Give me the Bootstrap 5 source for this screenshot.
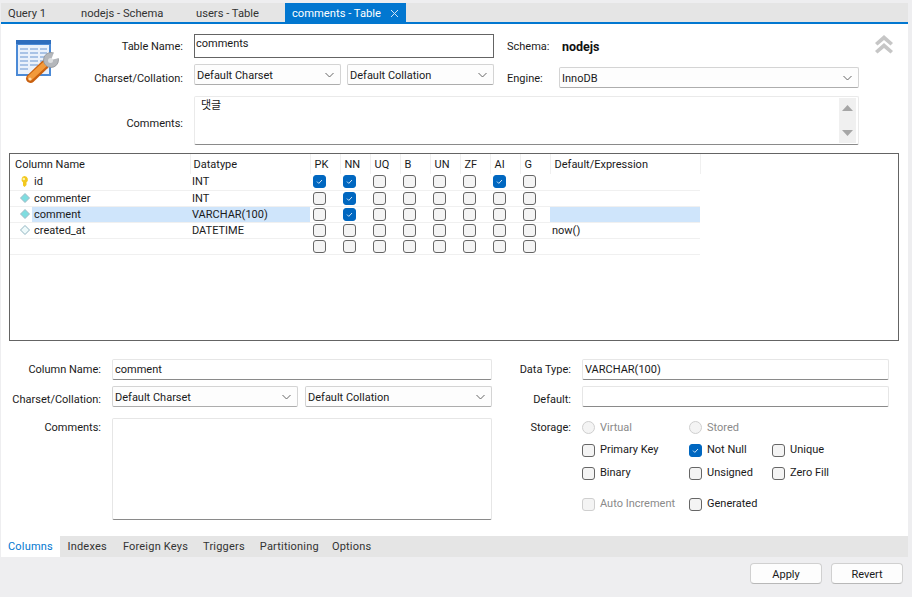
<!DOCTYPE html>
<html lang="en">
<head>
<meta charset="utf-8">
<title>comments - Table</title>
<link href="https://cdn.jsdelivr.net/npm/bootstrap@5.3.0/dist/css/bootstrap.min.css" rel="stylesheet">
<style>
html,body{height:100%;overflow:hidden}
body{background:#eeeef0;font-family:Roboto,"Noto Sans CJK KR",sans-serif;font-size:11px;line-height:16px;color:#1a1a1a}
.wb-root{width:908px;height:597px;display:flex;flex-direction:column;padding-left:1px;padding-top:3px;padding-bottom:3px}
.doc-tabs{height:21px;flex:none;background:#e5e5e5;border-bottom:2px solid #0277d0;display:flex;align-items:stretch;font-size:11.2px}
.doc-tab{padding:2px 7px 0;color:#333;white-space:nowrap;display:flex;align-items:center;height:19px;width:73px}
.doc-tab.t2{width:115px}.doc-tab.t3{width:96px}
.doc-tab.on{background:#0277d0;color:#fff;width:121px;justify-content:space-between}
.doc-main{flex:1 1 auto;background:#fff;min-height:0}
.top-grid{display:grid;padding:10px 0 0 14px;grid-template-columns:45px 123px 11px 147px 6px 147px 13px 52px 300px 16px 18px;grid-template-rows:24px 24px 51px;row-gap:6px}
.lbl{text-align:right;white-space:nowrap;align-self:center;padding-top:2px}
.lbl-l{white-space:nowrap;align-self:center;padding-top:2px}
.strong-name{font-size:12.5px;font-weight:700;padding-left:3px;color:#111}
.app-icon{grid-column:1;grid-row:1/3;margin-top:6px}
.wb-input.form-control{border-radius:2px;border:1px solid #e6e6e6;border-bottom-color:#8a8a8a;font-size:11px;line-height:16px;padding:0 2px;height:21px;min-height:0;color:#1a1a1a;box-shadow:none}
.wb-input.strong.form-control{border:1px solid #646464;border-radius:0;height:24px;padding:0 1px 6px}
.wb-select.form-select{border-radius:2px;border:1px solid #d4d4d4;border-bottom-color:#adadad;font-size:11px;line-height:16px;padding:2px 20px 0 2px;height:21px;color:#1a1a1a;background-color:#fdfdfd;background-position:right 6px center;background-size:9px 6px;box-shadow:none;background-image:url("data:image/svg+xml,%3csvg xmlns='http://www.w3.org/2000/svg' viewBox='0 0 9 6'%3e%3cpath fill='none' stroke='%23666' d='M.5 1l4 4 4-4'/%3e%3c/svg%3e")}
.note-box{grid-column:4/10;grid-row:3;display:flex;border:1px solid #eaeaea;border-bottom-color:#8a8a8a;border-radius:2px;padding:1px;background:#fff;margin-top:2px}
.note-text{flex:1 1 auto;padding:0 5px;line-height:16px}
.scroll-side{width:17px;margin-right:1px;background:#f0f0f0;display:flex;flex-direction:column;justify-content:space-between;align-items:center;padding:7px 0}
.grid-box{margin:8px 0 0 8px;width:890px;height:188px;border:1px solid #646464;overflow:hidden}
.col-table.table{table-layout:fixed;width:690px;margin:0;border-collapse:collapse;--bs-table-bg:transparent;color:#1a1a1a;font-size:11px}
.col-table th,.col-table td{padding:0;line-height:15px;height:16px;border:0;box-shadow:none;white-space:nowrap;overflow:hidden;vertical-align:middle;color:#1a1a1a}
.col-table th{font-weight:400;height:20px;padding:1px 0 0 4px;border-right:1px solid #f0f0f0;background:#fff}
.col-table th.first{padding-left:5px}
.col-table th.second{padding-left:3px}
.col-table td{border-bottom:1px solid #f0f0f0}
.col-table td.tt{padding-left:2px}
.col-table td.cc{padding-left:3px;line-height:0}
.name-wrap{display:flex;align-items:center;height:15px;padding-left:10px}
.name-wrap svg{flex:none;margin-right:2px}
.name-wrap svg.key-ico{margin-right:3px}
.name-wrap span{flex:1 1 auto;align-self:stretch;padding-left:2px}
.sel-bg{background:#cfe5fb}
.col-table td.sel{background:#cfe5fb}
.wb-check.form-check-input{width:13px;height:13px;margin:0;border:1px solid #666;border-radius:3px;background-color:#f4f4f4;box-shadow:none;vertical-align:top;opacity:1}
.wb-check.form-check-input:checked{background-color:#0067c0;border-color:#0067c0;background-size:11px 11px;background-image:url("data:image/svg+xml,%3csvg xmlns='http://www.w3.org/2000/svg' viewBox='0 0 11 11'%3e%3cpath fill='none' stroke='%23cfe4f7' d='M3 5.6l1.8 1.8L8 4'/%3e%3c/svg%3e")}
.wb-check.form-check-input:disabled{border-color:#cfcfcf;background-color:#f4f4f4}
.wb-check.form-check-input[type=radio]{border-radius:50%}
.low-row{display:flex;margin-top:18px}
.low-left{width:491px;display:grid;grid-template-columns:100px 11px 186px 7px 187px;grid-template-rows:21px 21px 102px;row-gap:6px}
.low-left .area{margin-top:5px;height:102px}
.low-right{width:397px;display:grid;grid-template-columns:79px 11px 307px;grid-template-rows:21px 21px auto;row-gap:6px;align-content:start}
.opts{grid-column:3;display:grid;grid-template-columns:107px 83px auto;margin-top:7px;row-gap:7px;align-content:start}
.opt{display:flex;align-items:center;gap:5px;height:16px;white-space:nowrap}
.opt.first{height:15px}
.opt.dim{color:#8a8a8a}
.opt.late{margin-top:8px}
.lbl.down{margin-top:5px}
.lbl.up{margin-bottom:1px}
.sto-lbl{align-self:start;margin-top:5px}
.sub-tabs{height:21px;flex:none;background:#e5e5e5;display:flex;align-items:center;color:#333;letter-spacing:.2px}
.sub-tab{height:21px;padding:1px 7.5px 0;display:flex;align-items:center;white-space:nowrap}
.sub-tab.on{background:#fff;color:#0277d0;width:59px;padding-left:7px}
.sub-tab.shift-r{margin-left:1px}
.sub-tab.shift-l{margin-left:-2px}
.foot-bar{flex:none;height:37px;display:flex;justify-content:flex-end;align-items:flex-start;gap:9px;padding:6px 5px 0 0}
.wb-btn.btn{width:72px;height:21px;padding:2px 0 0;font-size:11px;line-height:17px;border:1px solid #d0d0d0;border-bottom-color:#b8b8b8;border-radius:4px;background:#fdfdfd;color:#1a1a1a}
.wb-textarea.form-control{resize:none}
</style>
</head>
<body>
<div class="wb-root">
  <div class="doc-tabs">
    <div class="doc-tab">Query 1</div>
    <div class="doc-tab t2">nodejs - Schema</div>
    <div class="doc-tab t3">users - Table</div>
    <div class="doc-tab on">comments - Table
      <svg width="9" height="9" viewBox="0 0 9 9"><path d="M1 1l7 7M8 1L1 8" stroke="#cfe4f7" fill="none"/></svg>
    </div>
  </div>

  <div class="doc-main">
    <div class="top-grid">
      <svg class="app-icon" width="45" height="44" viewBox="0 0 45 44">
        <rect x="1" y="0" width="35" height="36" fill="#4b8ad6"/>
        <rect x="1" y="0" width="35" height="4" fill="#2d6dbd"/>
        <rect x="3" y="5" width="31" height="29" fill="#eaf1fb"/>
        <g fill="#a9c3e6">
          <rect x="5" y="8" width="8" height="2"/><rect x="15" y="8" width="8" height="2"/><rect x="25" y="8" width="7" height="2"/>
          <rect x="5" y="12" width="8" height="2"/><rect x="15" y="12" width="8" height="2"/><rect x="25" y="12" width="7" height="2"/>
          <rect x="5" y="16" width="8" height="2"/><rect x="15" y="16" width="8" height="2"/><rect x="25" y="16" width="7" height="2"/>
          <rect x="5" y="20" width="8" height="2"/><rect x="15" y="20" width="8" height="2"/><rect x="25" y="20" width="7" height="2"/>
          <rect x="5" y="24" width="8" height="2"/><rect x="15" y="24" width="8" height="2"/>
          <rect x="5" y="28" width="8" height="2"/>
        </g>
        <path d="M15.500 38.500l14-13.500" stroke="#c9600f" stroke-width="9" stroke-linecap="round"/>
        <path d="M15.500 37.500l13.500-12.500" stroke="#f29a3c" stroke-width="5.500" stroke-linecap="round"/>
        <circle cx="15" cy="39" r="1.600" fill="#ffd9a8"/>
        <circle cx="36" cy="20" r="7.500" fill="#b4b7bb" stroke="#8f9296" stroke-width=".8"/>
        <path d="M36 20L39.500 11H46V17.500z" fill="#fff"/>
        <circle cx="35.500" cy="20.500" r="2.500" fill="#dcdee0"/>
      </svg>
      <div class="lbl" style="grid-column:2;grid-row:1">Table Name:</div>
      <input class="form-control wb-input strong" style="grid-column:4/7;grid-row:1" value="comments">
      <div class="lbl-l" style="grid-column:8;grid-row:1">Schema:</div>
      <div class="lbl-l strong-name" style="grid-column:9;grid-row:1">nodejs</div>
      <svg style="grid-column:11;grid-row:1;margin-top:1px" width="18" height="19" viewBox="0 0 18 19"><path d="M0 8L9 0l9 8-2.500 2.500L9 5l-6.500 5.500zM0 16L9 8l9 8-2.500 2.500L9 13l-6.500 5.500z" fill="#c6c6c6"/></svg>

      <div class="lbl" style="grid-column:2;grid-row:2;margin-top:3px">Charset/Collation:</div>
      <select class="form-select wb-select" style="grid-column:4;grid-row:2"><option>Default Charset</option></select>
      <select class="form-select wb-select" style="grid-column:6;grid-row:2"><option>Default Collation</option></select>
      <div class="lbl-l" style="grid-column:8;grid-row:2;margin-top:3px">Engine:</div>
      <select class="form-select wb-select" style="grid-column:9;grid-row:2;align-self:end"><option>InnoDB</option></select>

      <div class="lbl" style="grid-column:2;grid-row:3;margin-top:6px">Comments:</div>
      <div class="note-box">
        <div class="note-text">댓글</div>
        <div class="scroll-side">
          <svg width="11" height="6" viewBox="0 0 11 6"><path d="M5.500 0L11 6H0z" fill="#a6a6a6"/></svg>
          <svg width="11" height="6" viewBox="0 0 11 6"><path d="M0 0h11L5.500 6z" fill="#a6a6a6"/></svg>
        </div>
      </div>
    </div>

    <div class="grid-box">
      <table class="table col-table">
        <colgroup><col style="width:180px"><col style="width:120px"><col span="8" style="width:30px"><col style="width:150px"></colgroup>
        <thead><tr><th class="first">Column Name</th><th class="second">Datatype</th><th>PK</th><th>NN</th><th>UQ</th><th>B</th><th>UN</th><th>ZF</th><th>AI</th><th>G</th><th>Default/Expression</th></tr></thead>
        <tbody>
          <tr>
            <td><div class="name-wrap"><svg class="key-ico" width="9" height="11" viewBox="0 0 9 11"><path d="M4.500 0a3.500 3.500 0 0 1 2 6.300V9L4.500 11 3 9.500V6.300a3.500 3.500 0 0 1 1.500-6.300z" fill="#f2c81e"/><circle cx="3.800" cy="3" r="1.300" fill="#fff3a8"/></svg><span>id</span></div></td>
            <td class="tt">INT</td>
            <td class="cc"><input class="form-check-input wb-check" type="checkbox" checked></td><td class="cc"><input class="form-check-input wb-check" type="checkbox" checked></td><td class="cc"><input class="form-check-input wb-check" type="checkbox"></td><td class="cc"><input class="form-check-input wb-check" type="checkbox"></td><td class="cc"><input class="form-check-input wb-check" type="checkbox"></td><td class="cc"><input class="form-check-input wb-check" type="checkbox"></td><td class="cc"><input class="form-check-input wb-check" type="checkbox" checked></td><td class="cc"><input class="form-check-input wb-check" type="checkbox"></td>
            <td></td>
          </tr>
          <tr>
            <td><div class="name-wrap"><svg width="10" height="10" viewBox="0 0 10 10"><path d="M5 .5L9.500 5 5 9.500.5 5z" fill="#7fdde0" stroke="#9fb9c4"/></svg><span>commenter</span></div></td>
            <td class="tt">INT</td>
            <td class="cc"><input class="form-check-input wb-check" type="checkbox"></td><td class="cc"><input class="form-check-input wb-check" type="checkbox" checked></td><td class="cc"><input class="form-check-input wb-check" type="checkbox"></td><td class="cc"><input class="form-check-input wb-check" type="checkbox"></td><td class="cc"><input class="form-check-input wb-check" type="checkbox"></td><td class="cc"><input class="form-check-input wb-check" type="checkbox"></td><td class="cc"><input class="form-check-input wb-check" type="checkbox"></td><td class="cc"><input class="form-check-input wb-check" type="checkbox"></td>
            <td></td>
          </tr>
          <tr>
            <td><div class="name-wrap"><svg width="10" height="10" viewBox="0 0 10 10"><path d="M5 .5L9.500 5 5 9.500.5 5z" fill="#7fdde0" stroke="#9fb9c4"/></svg><span class="sel-bg">comment</span></div></td>
            <td class="tt sel">VARCHAR(100)</td>
            <td class="cc"><input class="form-check-input wb-check" type="checkbox"></td><td class="cc"><input class="form-check-input wb-check" type="checkbox" checked></td><td class="cc"><input class="form-check-input wb-check" type="checkbox"></td><td class="cc"><input class="form-check-input wb-check" type="checkbox"></td><td class="cc"><input class="form-check-input wb-check" type="checkbox"></td><td class="cc"><input class="form-check-input wb-check" type="checkbox"></td><td class="cc"><input class="form-check-input wb-check" type="checkbox"></td><td class="cc"><input class="form-check-input wb-check" type="checkbox"></td>
            <td class="sel"></td>
          </tr>
          <tr>
            <td><div class="name-wrap"><svg width="10" height="10" viewBox="0 0 10 10"><path d="M5 .5L9.500 5 5 9.500.5 5z" fill="#eefafb" stroke="#8fb3bf"/></svg><span>created_at</span></div></td>
            <td class="tt">DATETIME</td>
            <td class="cc"><input class="form-check-input wb-check" type="checkbox"></td><td class="cc"><input class="form-check-input wb-check" type="checkbox"></td><td class="cc"><input class="form-check-input wb-check" type="checkbox"></td><td class="cc"><input class="form-check-input wb-check" type="checkbox"></td><td class="cc"><input class="form-check-input wb-check" type="checkbox"></td><td class="cc"><input class="form-check-input wb-check" type="checkbox"></td><td class="cc"><input class="form-check-input wb-check" type="checkbox"></td><td class="cc"><input class="form-check-input wb-check" type="checkbox"></td>
            <td class="tt">now()</td>
          </tr>
          <tr>
            <td></td><td></td>
            <td class="cc"><input class="form-check-input wb-check" type="checkbox"></td><td class="cc"><input class="form-check-input wb-check" type="checkbox"></td><td class="cc"><input class="form-check-input wb-check" type="checkbox"></td><td class="cc"><input class="form-check-input wb-check" type="checkbox"></td><td class="cc"><input class="form-check-input wb-check" type="checkbox"></td><td class="cc"><input class="form-check-input wb-check" type="checkbox"></td><td class="cc"><input class="form-check-input wb-check" type="checkbox"></td><td class="cc"><input class="form-check-input wb-check" type="checkbox"></td>
            <td></td>
          </tr>
        </tbody>
      </table>
    </div>

    <div class="low-row">
      <div class="low-left">
        <div class="lbl up">Column Name:</div>
        <input class="form-control wb-input" style="grid-column:3/6" value="comment">
        <div class="lbl down" style="grid-row:2;grid-column:1">Charset/Collation:</div>
        <select class="form-select wb-select" style="grid-row:2;grid-column:3"><option>Default Charset</option></select>
        <select class="form-select wb-select" style="grid-row:2;grid-column:5"><option>Default Collation</option></select>
        <div class="lbl" style="grid-row:3;grid-column:1;align-self:start;margin-top:5px">Comments:</div>
        <textarea class="form-control wb-input wb-textarea area" style="grid-row:3;grid-column:3/6"></textarea>
      </div>
      <div class="low-right">
        <div class="lbl up">Data Type:</div>
        <input class="form-control wb-input" style="grid-column:3" value="VARCHAR(100)">
        <div class="lbl down" style="grid-row:2;grid-column:1">Default:</div>
        <input class="form-control wb-input" style="grid-row:2;grid-column:3">
        <div class="lbl sto-lbl" style="grid-row:3;grid-column:1">Storage:</div>
        <div class="opts" style="grid-row:3">
          <label class="opt dim first"><input class="form-check-input wb-check" type="radio" disabled>Virtual</label>
          <label class="opt dim first"><input class="form-check-input wb-check" type="radio" disabled>Stored</label>
          <span></span>
          <label class="opt"><input class="form-check-input wb-check" type="checkbox">Primary Key</label>
          <label class="opt"><input class="form-check-input wb-check" type="checkbox" checked>Not Null</label>
          <label class="opt"><input class="form-check-input wb-check" type="checkbox">Unique</label>
          <label class="opt"><input class="form-check-input wb-check" type="checkbox">Binary</label>
          <label class="opt"><input class="form-check-input wb-check" type="checkbox">Unsigned</label>
          <label class="opt"><input class="form-check-input wb-check" type="checkbox">Zero Fill</label>
          <label class="opt dim late"><input class="form-check-input wb-check" type="checkbox" disabled>Auto Increment</label>
          <label class="opt late"><input class="form-check-input wb-check" type="checkbox">Generated</label>
        </div>
      </div>
    </div>
  </div>

  <div class="sub-tabs">
    <div class="sub-tab on">Columns</div>
    <div class="sub-tab">Indexes</div>
    <div class="sub-tab shift-r">Foreign Keys</div>
    <div class="sub-tab">Triggers</div>
    <div class="sub-tab">Partitioning</div>
    <div class="sub-tab shift-l">Options</div>
  </div>
  <div class="foot-bar">
    <button type="button" class="btn wb-btn">Apply</button>
    <button type="button" class="btn wb-btn">Revert</button>
  </div>
</div>
</body>
</html>
